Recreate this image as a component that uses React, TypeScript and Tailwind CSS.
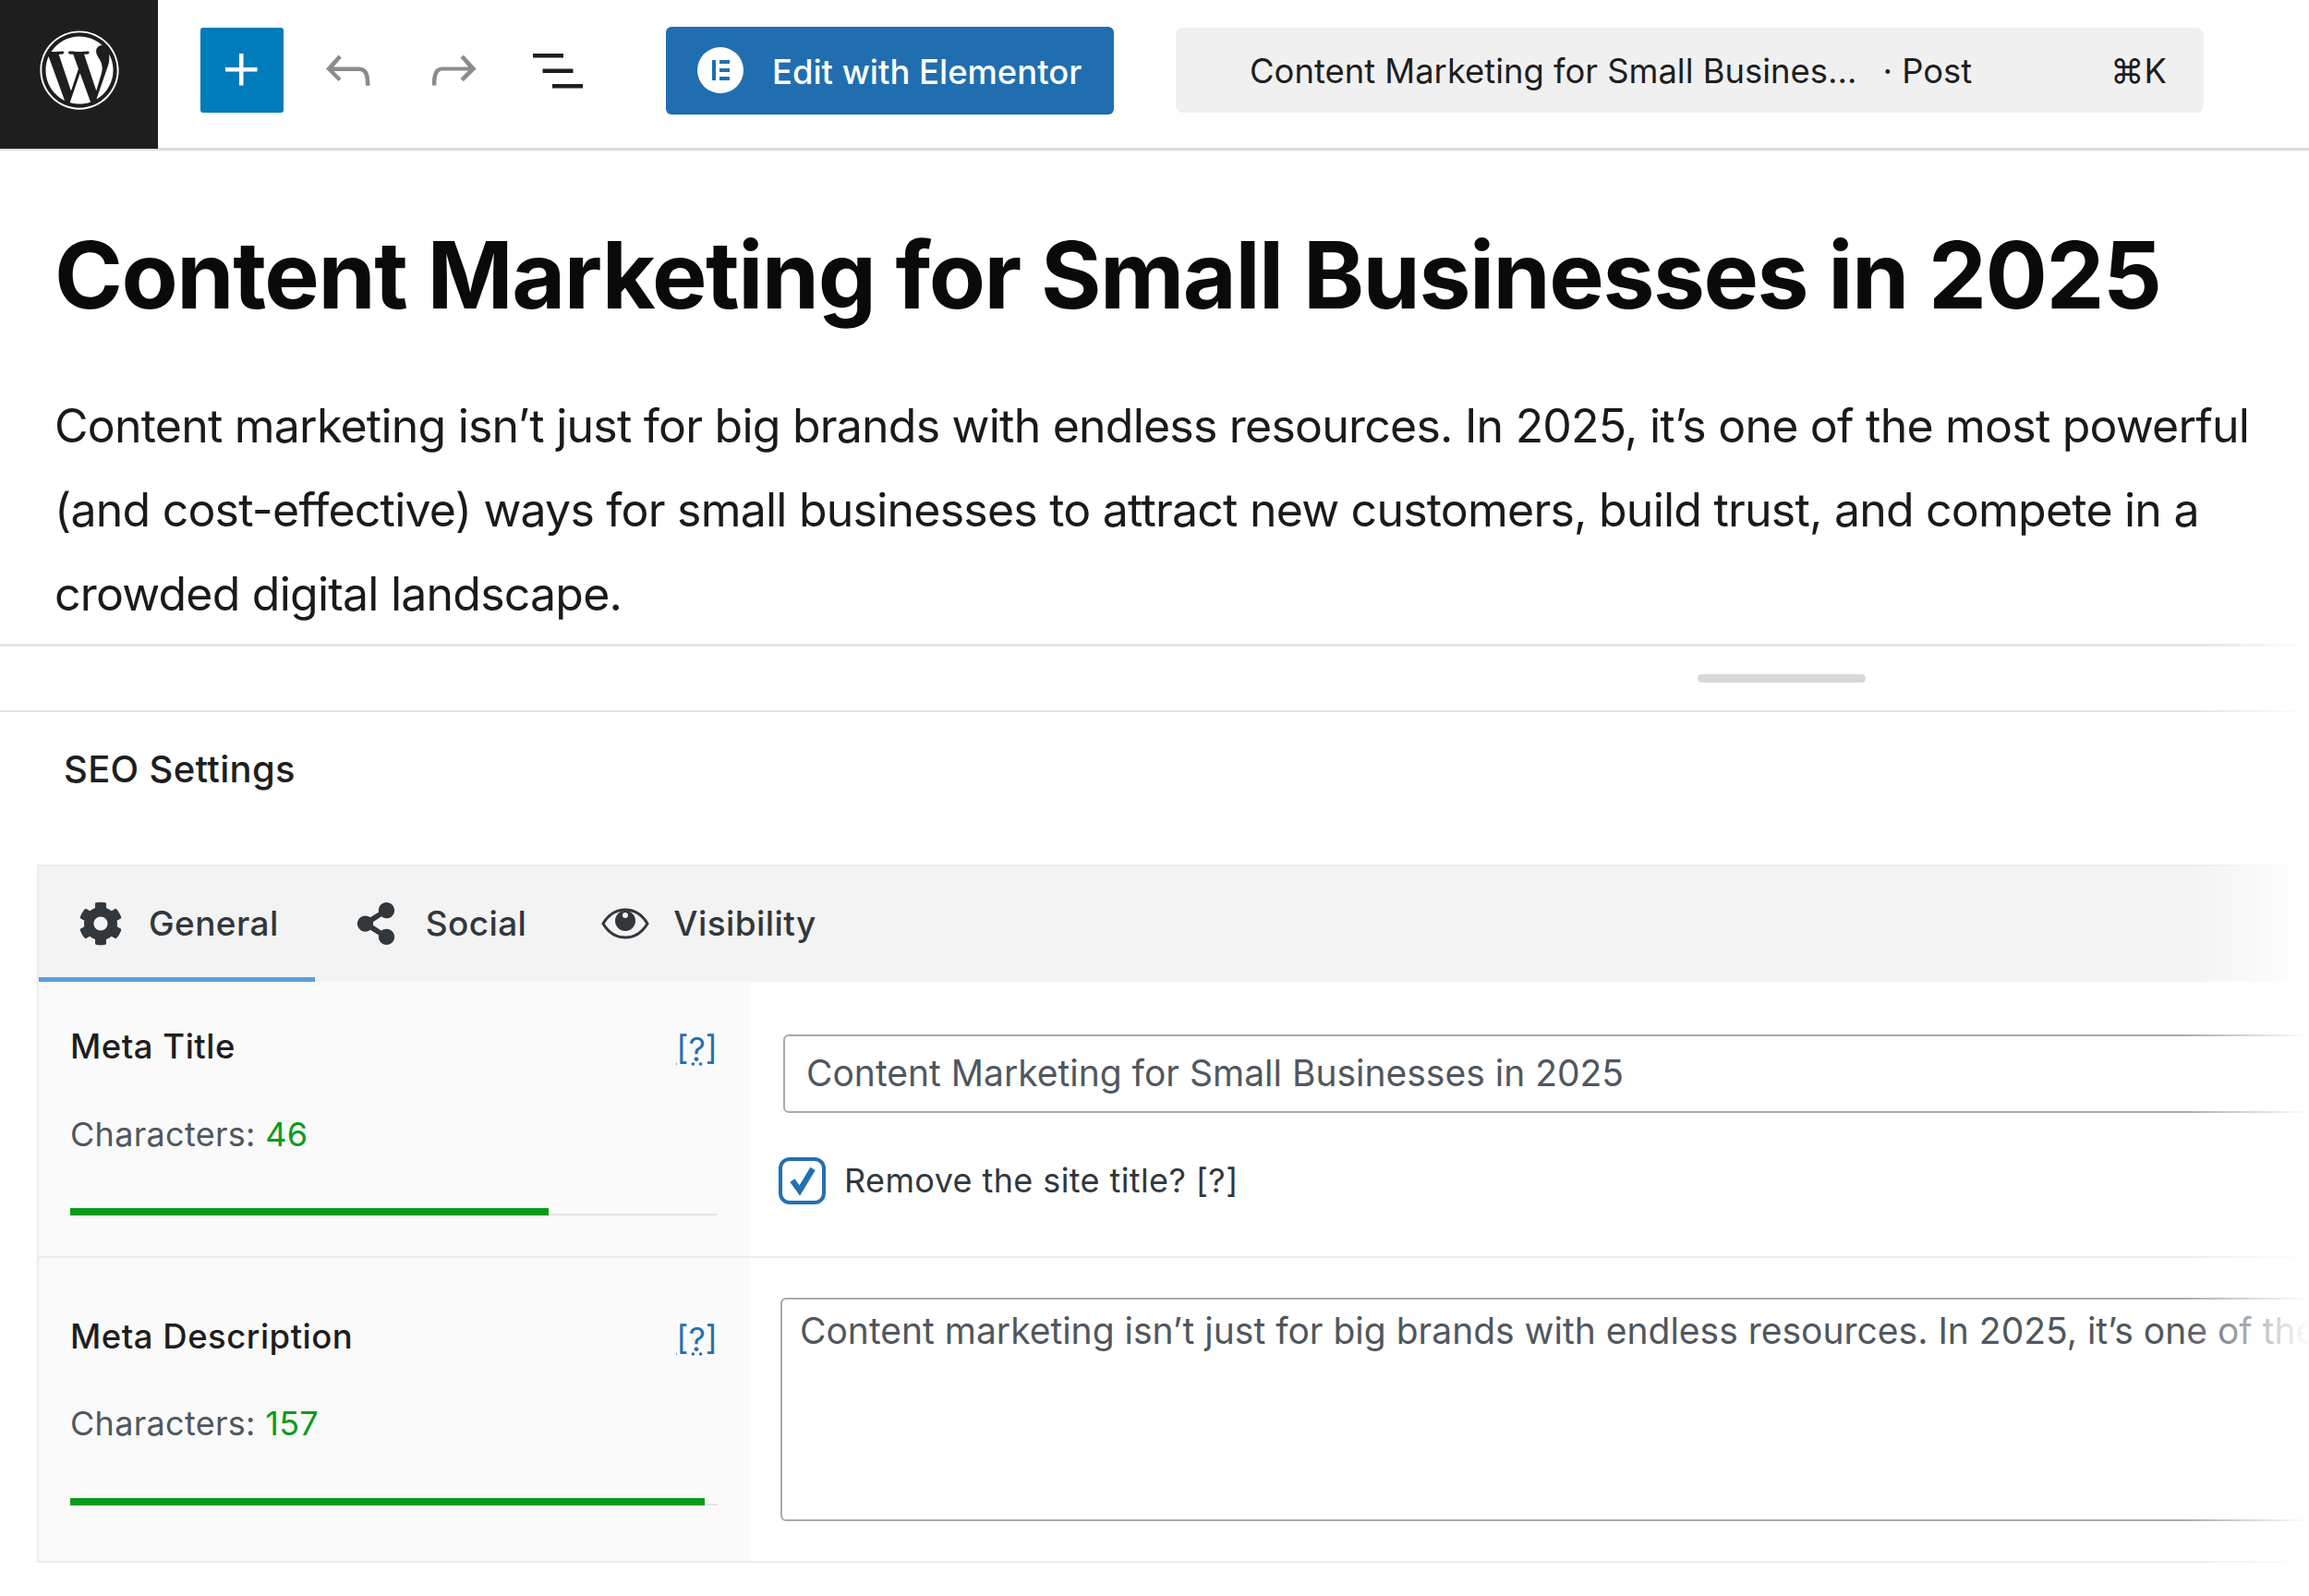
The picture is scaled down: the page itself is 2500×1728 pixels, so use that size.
import { FaWordpress, FaCog, FaShareAlt } from 'react-icons/fa';

const TABS = [
  { label: 'General', cls: 'pl-[42px] pr-[39px] gap-[27px] border-b-[5px] border-[#5b9dd9]', icon: <FaCog className="h-[48px] w-[50px] text-[#32373c]" /> },
  { label: 'Social', cls: 'pl-[43px] pr-[36px] gap-[31px] border-b-[5px] border-transparent', icon: <FaShareAlt className="h-[46px] w-[46px] text-[#32373c]" /> },
  { label: 'Visibility', cls: 'pl-[45px] gap-[26px] border-b-[5px] border-transparent', icon: <EyeIcon /> },
];

function EyeIcon() {
  return (
    <svg viewBox="0 0 52 36" className="h-[36px] w-[52px] text-[#32373c]" fill="none">
      <path d="M2 18C8 8 16 3 26 3s18 5 24 15c-6 10-14 15-24 15S8 28 2 18Z" stroke="currentColor" strokeWidth="3" />
      <circle cx="26" cy="15" r="11" fill="currentColor" />
      <circle cx="26" cy="9" r="3" fill="#f3f3f3" />
    </svg>
  );
}

function ToolIcon({ d }: { d: string }) {
  return (
    <svg viewBox="0 0 24 24" className="h-[72px] w-[72px]" fill="currentColor">
      <path d={d} />
    </svg>
  );
}

function CharBar({ width, rest }: { width: string; rest: string }) {
  return (
    <div className="flex items-end">
      <div className={`h-[8px] bg-[#0a9b1c] ${width}`} />
      <div className={`h-[2px] bg-[#e4e4e4] ${rest}`} />
    </div>
  );
}

function MetaHead({ title, count, countGap }: { title: string; count: string; countGap: string }) {
  return (
    <>
      <div className="flex items-center justify-between">
        <span className="text-[36.5px] leading-[44px] font-medium tracking-[0.5px] text-[#1e1e1e]">{title}</span>
        <span className="translate-y-[3px] text-[36px] leading-[44px] text-[#2271b1] underline decoration-dotted">[?]</span>
      </div>
      <div className={`text-[36px] leading-[44px] tracking-[0.3px] text-[#50575e] ${countGap}`}>
        Characters: <span className="text-[#0a9b1c]">{count}</span>
      </div>
    </>
  );
}

export default function App() {
  return (
    <div
      className="relative h-[1728px] w-[2500px] overflow-hidden bg-white"
      style={{ fontFamily: "Inter, 'Liberation Sans', sans-serif" }}
    >
      {/* ============ Editor top bar ============ */}
      <header className="flex h-[163px] border-b-[3px] border-[#dcdcdc]">
        <div className="flex h-[161px] w-[171px] items-center justify-center bg-[#1e1e1e] pb-[9px]">
          <FaWordpress className="h-[88px] w-[88px] text-white" />
        </div>
        <div className="flex h-[152px] flex-1 items-center">
          <button className="ml-[46px] flex h-[92px] w-[90px] items-center justify-center rounded-[3px] bg-[#007cba] text-white">
            <ToolIcon d="M11 12.5V17.5H12.5V12.5H17.5V11H12.5V6H11V11H6V12.5H11Z" />
          </button>
          <button className="ml-[34px] text-[#8c8c8c]">
            <ToolIcon d="M18.3 11.7c-.6-.6-1.4-.9-2.3-.9H6.7l2.9-3.3-1.1-1-4.5 5L8.5 16l1-1-2.7-2.7H16c.5 0 .9.2 1.3.5 1 1 1 3.4 1 4.5v.3h1.5v-.2c0-1.5 0-4.3-1.5-5.7z" />
          </button>
          <button className="ml-[42px] text-[#8c8c8c]">
            <ToolIcon d="M15.6 6.5l-1.1 1 2.9 3.3H8c-.9 0-1.7.3-2.3.9-1.4 1.5-1.4 4.2-1.4 5.6v.2h1.5v-.3c0-1.1 0-3.5 1-4.5.3-.3.7-.5 1.3-.5h9.2L14.5 15l1.1 1.1 4.6-4.6-4.6-5z" />
          </button>
          <button className="ml-[41px] text-[#1e1e1e]">
            <ToolIcon d="M3 6h11v1.5H3V6Zm3.5 5.5h11V13h-11v-1.5ZM21 17H10v1.5h11V17Z" />
          </button>
          <button className="ml-[81px] flex h-[95px] w-[485px] items-center rounded-[6px] bg-[#206eb0] pl-[34px] text-white">
            <svg viewBox="0 0 50 50" className="h-[50px] w-[50px]">
              <circle cx="25" cy="25" r="25" fill="white" />
              <rect x="16" y="14" width="4" height="22" fill="#206eb0" />
              <rect x="24" y="14" width="11" height="4" fill="#206eb0" />
              <rect x="24" y="23" width="11" height="4" fill="#206eb0" />
              <rect x="24" y="32" width="11" height="4" fill="#206eb0" />
            </svg>
            <span className="ml-[31px] pt-[4px] text-[36.4px] font-medium">Edit with Elementor</span>
          </button>
          <div className="ml-[67px] flex h-[92px] w-[1113px] items-center rounded-[8px] bg-[#f0f0f0] pt-[2px] pr-[40px] pl-[80px] text-[36.4px] text-[#1e1e1e]">
            <span>Content Marketing for Small Busines...</span>
            <span className="ml-[28px]">· Post</span>
            <span className="ml-auto">⌘K</span>
          </div>
        </div>
      </header>

      {/* ============ Post title and intro ============ */}
      <main className="h-[537px] border-b-[3px] border-[#e2e2e2] pl-[59px]">
        <h1 className="pt-[75px] text-[100px] leading-[120px] font-bold tracking-[-1.47px] text-[#0a0a0a]">
          Content Marketing for Small Businesses in 2025
        </h1>
        <p className="mt-[58px] w-[2430px] text-[50px] leading-[91px] tracking-[-0.78px] text-[#1a1a1a]">
          Content marketing isn’t just for big brands with endless resources. In 2025, it’s one of the most powerful
          (and cost-effective) ways for small businesses to attract new customers, build trust, and compete in a
          crowded digital landscape.
        </p>
      </main>

      {/* ============ Resize handle ============ */}
      <div className="flex h-[71px] items-center border-b-[2px] border-[#e2e2e2] pb-[1px] pl-[1838px]">
        <div className="h-[9px] w-[182px] rounded-full bg-[#d8d8d8]" />
      </div>

      {/* ============ SEO settings panel ============ */}
      <div className="pl-[40px]">
        <h2 className="ml-[29px] pt-[39px] pb-[2px] text-[40px] leading-[46px] font-medium tracking-[0.3px] text-[#1e1e1e]">SEO Settings</h2>
        <section className="mt-[78px] w-[2600px] border-t-[2px] border-b-[2px] border-l-[2px] border-[#ececec]">
          <div className="flex h-[125px] bg-[#f3f3f3]">
            {TABS.map((tab) => (
              <div key={tab.label} className={`flex items-center pt-[3px] ${tab.cls}`}>
                {tab.icon}
                <span className="text-[37px] font-medium tracking-[0.4px] text-[#32373c]">{tab.label}</span>
              </div>
            ))}
          </div>

          <div className="flex h-[299px] border-b-[2px] border-[#ececec]">
            <div className="w-[772px] bg-[#fafafa] pt-[48px] pr-[35px] pl-[34px]">
              <MetaHead title="Meta Title" count="46" countGap="mt-[51px]" />
              <div className="mt-[58px]">
                <CharBar width="w-[518px]" rest="w-[183px]" />
              </div>
            </div>
            <div className="flex-1 pt-[57px] pl-[36px]">
              <div className="flex h-[85px] w-[1800px] items-center rounded-[6px] border-[2px] border-[#aaaaaa] pl-[23px] text-[39px] text-[#50575e]">
                Content Marketing for Small Businesses in 2025
              </div>
              <label className="-ml-[5px] mt-[46px] flex items-center">
                <span className="flex h-[51px] w-[51px] items-center justify-center rounded-[12px] border-[4px] border-[#2271b1] text-[#2271b1]">
                  <svg viewBox="0 0 24 24" className="h-[38px] w-[38px]" fill="none" stroke="currentColor" strokeWidth="4">
                    <path d="M5 12l5 7L19 4" />
                  </svg>
                </span>
                <span className="ml-[20px] text-[36px] tracking-[0.4px] text-[#32373c]">Remove the site title? [?]</span>
              </label>
            </div>
          </div>

          <div className="flex h-[328px]">
            <div className="w-[772px] bg-[#fafafa] pt-[63px] pr-[35px] pl-[34px]">
              <MetaHead title="Meta Description" count="157" countGap="mt-[50px]" />
              <div className="mt-[59px]">
                <CharBar width="w-[687px]" rest="w-[14px]" />
              </div>
            </div>
            <div className="flex-1 pt-[43px] pl-[33px]">
              <div className="h-[242px] w-[1800px] overflow-hidden rounded-[6px] border-[2px] border-[#aaaaaa] pt-[10px] pl-[19px] text-[39px] leading-[48px] whitespace-nowrap text-[#50575e]">
                Content marketing isn’t just for big brands with endless resources. In 2025, it’s one of the most powerful
              </div>
            </div>
          </div>
        </section>
      </div>

      {/* fade at the right edge */}
      <div className="pointer-events-none absolute top-[696px] right-0 bottom-0 w-[137px] bg-gradient-to-r from-transparent to-white" />
    </div>
  );
}
